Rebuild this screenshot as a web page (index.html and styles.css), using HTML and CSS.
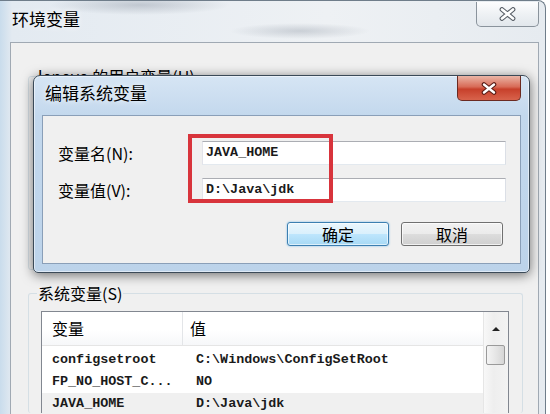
FILE: index.html
```html
<!DOCTYPE html>
<html lang="zh-CN">
<head>
  <meta charset="UTF-8">
  <meta name="viewport" content="width=device-width, initial-scale=1.0">
  <title>环境变量</title>
  <link rel="stylesheet" href="styles.css">
</head>
<body>
  <div class="win">
    <div class="titlebar">
      <span class="title">环境变量</span>
      <button class="close">
        <svg width="17" height="14" viewBox="0 0 17 14">
          <path d="M3 2.5 L14 11.5 M14 2.5 L3 11.5" stroke="#5a6068" stroke-width="4.8" stroke-linecap="round"/>
          <path d="M3 2.5 L14 11.5 M14 2.5 L3 11.5" stroke="#fff" stroke-width="2.6" stroke-linecap="round"/>
        </svg>
      </button>
    </div>
    <div class="panel">
      <fieldset class="group user">
        <legend>lenovo 的用户变量(U)</legend>
      </fieldset>
      <fieldset class="group system">
        <legend>系统变量(S)</legend>
        <div class="listbox">
          <div class="table">
            <div class="head">
              <div class="th">变量</div>
              <div class="th col2">值</div>
            </div>
            <div class="row">
              <div class="td">configsetroot</div>
              <div class="td col2">C:\Windows\ConfigSetRoot</div>
            </div>
            <div class="row">
              <div class="td">FP_NO_HOST_C...</div>
              <div class="td col2">NO</div>
            </div>
            <div class="row selected">
              <div class="td">JAVA_HOME</div>
              <div class="td col2">D:\Java\jdk</div>
            </div>
          </div>
          <div class="scrollbar">
            <div class="arrow"><span></span></div>
            <div class="thumb"></div>
          </div>
        </div>
      </fieldset>
    </div>

    <div class="dialog">
      <div class="dlg-title">
        <span class="title">编辑系统变量</span>
        <button class="close red">
          <svg width="16" height="13" viewBox="0 0 16 13">
            <path d="M3 2.5 L13 10.5 M13 2.5 L3 10.5" stroke="#5b1d16" stroke-width="4.6" stroke-linecap="round"/>
            <path d="M3 2.5 L13 10.5 M13 2.5 L3 10.5" stroke="#fff" stroke-width="2.4" stroke-linecap="round"/>
          </svg>
        </button>
      </div>
      <div class="dlg-panel">
        <div class="fields">
          <label>变量名(N):</label>
          <div class="input">JAVA_HOME</div>
          <label>变量值(V):</label>
          <div class="input">D:\Java\jdk</div>
        </div>
        <div class="buttons">
          <button class="btn default">确定</button>
          <button class="btn">取消</button>
        </div>
        <div class="mark"></div>
      </div>
    </div>
  </div>
</body>
</html>
```

FILE: styles.css
```css
body{
  margin: 0;
  width: 550px;
  height: 414px;
  overflow: hidden;
  background: #fff;
  font-family: "Noto Sans CJK SC", sans-serif;
  color: #000;
}
.win{
  position: relative;
  width: 546px;
  height: 414px;
  box-sizing: border-box;
  overflow: hidden;
  border-top: 1px solid #6f7d8a;
  border-right: 1px solid #6f7d8a;
  border-top-right-radius: 8px;
  background:
    radial-gradient(ellipse 90px 10px at 140px 4px, rgba(120,130,145,.35), transparent),
    radial-gradient(ellipse 70px 8px at 300px 30px, rgba(120,130,145,.3), transparent),
    linear-gradient(90deg, #c9dcec 0, #e3eaf1 12px, #eef1f4 60%, #e6ebf0);
}
.titlebar{
  height: 41px;
  display: flex;
  justify-content: space-between;
  align-items: flex-start;
  padding: 0 6px 0 12px;
}
.title{
  font-size: 17px;
  line-height: 35px;
  text-shadow: 0 0 6px #fff;
}
.close{
  width: 63px;
  height: 25px;
  margin-top: 1px;
  padding: 0;
  display: flex;
  justify-content: center;
  align-items: center;
  border: 1px solid #8a939c;
  border-top: none;
  border-radius: 0 0 5px 5px;
  background: linear-gradient(#fdfdfe, #eef1f4 50%, #e2e7ec);
}
.panel{
  margin: 0 6px 0 10px;
  height: 372px;
  box-sizing: border-box;
  overflow: hidden;
  border: 1px solid #a0a9b3;
  border-bottom: none;
  background: #f0f0f0;
}
.group{
  margin: 0 15px 0 17px;
  padding: 0 13px 0 12px;
  border: 1px solid #d5dfe5;
  border-radius: 3px;
  min-width: 0;
}
.group legend{
  padding: 0 1px;
  margin-left: -4px;
  font-size: 16px;
  line-height: 18px;
}
.user{
  margin-top: 24px;
  height: 203px;
  box-sizing: border-box;
}
.system{
  margin-top: 14px;
  border-bottom: none;
}
.listbox{
  display: flex;
  margin-top: 9px;
  height: 101px;
  border: 1px solid #828790;
  border-bottom: none;
  background: #fff;
}
.table{
  flex: 1;
}
.head{
  display: grid;
  grid-template-columns: 140px 1fr;
  height: 33px;
  border-bottom: 1px solid #e5e5e5;
  background: linear-gradient(#fff 55%, #f6f7f9);
  margin-bottom: 3px;
  font-size: 16px;
}
.th{
  padding-left: 10px;
  line-height: 33px;
}
.th.col2{
  padding-left: 7px;
  border-left: 1px solid #e3e5e8;
}
.row{
  display: grid;
  grid-template-columns: 140px 1fr;
  height: 22px;
  line-height: 22px;
  font-family: "Liberation Mono", monospace;
  font-size: 13.4px;
  font-weight: bold;
  color: #1a1a1a;
  white-space: nowrap;
}
.row .td{
  padding-left: 10px;
}
.row .td.col2{
  padding-left: 14px;
}
.row.selected{
  background: #f0f0f0;
}
.scrollbar{
  width: 24px;
  border-left: 1px solid #e6e6e6;
  background: linear-gradient(90deg, #f8f8f8, #eeeeee 40%, #f3f3f3);
}
.arrow{
  height: 33px;
  display: flex;
  justify-content: center;
  align-items: center;
}
.arrow span{
  border-left: 4px solid transparent;
  border-right: 4px solid transparent;
  border-bottom: 4px solid #222;
}
.thumb{
  margin: 0 3px 0 2px;
  height: 20px;
  box-sizing: border-box;
  border: 1px solid #9a9a9a;
  border-radius: 2px;
  background: linear-gradient(90deg, #f4f4f4, #e6e6e6 50%, #d6d6d6);
}
.dialog{
  position: absolute;
  left: 33px;
  top: 74px;
  width: 497px;
  box-sizing: border-box;
  padding: 0 8px 8px;
  border: 1px solid #3b4a58;
  border-radius: 7px 7px 5px 5px;
  background: linear-gradient(#d6e5f4, #c3d8ed 40px, #bcd3ea);
  box-shadow: 0 2px 12px rgba(0, 0, 0, .55), inset 0 0 0 1px rgba(255, 255, 255, .5);
}
.dlg-title{
  height: 39px;
  display: flex;
  justify-content: space-between;
  align-items: flex-start;
}
.dlg-title .title{
  margin-left: 3px;
  line-height: 34px;
}
.close.red{
  width: 64px;
  margin-top: 0;
  border-color: #6b2a21;
  background: linear-gradient(#eab5a6, #d86b57 45%, #c7402b 55%, #d8634c);
}
.dlg-panel{
  position: relative;
  height: 149px;
  box-sizing: border-box;
  padding: 25px 14px 0 15px;
  border: 1px solid #8a9fb8;
  background: #f0f0f0;
}
.fields{
  display: grid;
  grid-template-columns: 144px 1fr;
  row-gap: 13px;
  align-items: center;
}
.fields label{
  font-size: 16px;
}
.input{
  height: 24px;
  box-sizing: border-box;
  padding-left: 3px;
  border: 1px solid;
  border-color: #abadb3 #dbdfe6 #e3e9ef #e2e3ea;
  background: #fff;
  font-family: "Liberation Mono", monospace;
  font-size: 13.4px;
  font-weight: bold;
  color: #1a1a1a;
  line-height: 22px;
}
.buttons{
  display: flex;
  justify-content: flex-end;
  gap: 12px;
  margin-top: 20px;
  padding-right: 3px;
}
.btn{
  width: 102px;
  height: 24px;
  padding: 0;
  font-family: inherit;
  font-size: 16px;
  line-height: 22px;
  color: #000;
  border: 1px solid #707070;
  border-radius: 3px;
  background: linear-gradient(#f2f2f2, #ebebeb 50%, #dddddd 50%, #cfcfcf);
  box-shadow: inset 0 0 0 1px rgba(255, 255, 255, .7);
}
.btn.default{
  border-color: #3c7fb1;
  background: linear-gradient(#eaf6fd, #d9f0fc 50%, #bee6fd 50%, #a7d9f5);
  box-shadow: inset 0 0 0 1px rgba(255, 255, 255, .6), 0 0 2px #6ab4e6;
}
.mark{
  position: absolute;
  left: 145px;
  top: 18px;
  width: 145px;
  height: 69px;
  box-sizing: border-box;
  border: 4px solid #d8343c;
}
```
